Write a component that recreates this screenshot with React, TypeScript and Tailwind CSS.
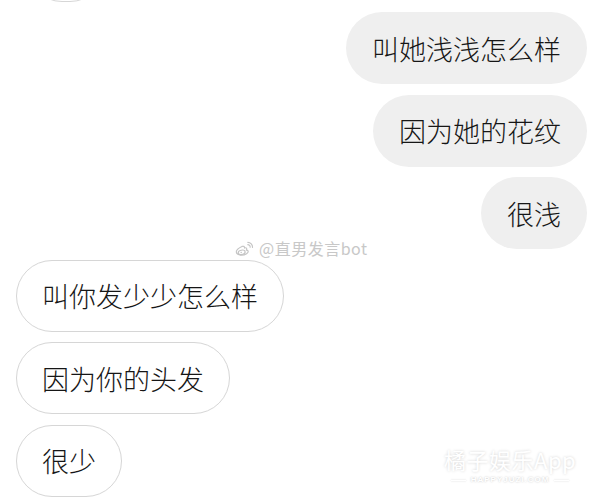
import React from 'react'

type Msg = { id: number; text: string; mine: boolean }

const messages: Msg[] = [
  { id: 1, text: '叫她浅浅怎么样', mine: true },
  { id: 2, text: '因为她的花纹', mine: true },
  { id: 3, text: '很浅', mine: true },
  { id: 4, text: '叫你发少少怎么样', mine: false },
  { id: 5, text: '因为你的头发', mine: false },
  { id: 6, text: '很少', mine: false },
]

const font = { fontFamily: '"Noto Sans CJK SC", "Noto Sans", sans-serif' }

function Bubble({ text, mine }: { text: string; mine: boolean }) {
  return (
    <div
      className={
        mine
          ? 'self-end h-[72px] flex items-center px-[26px] rounded-full bg-[#efefef] text-[27px] font-light leading-none text-[#161616] whitespace-nowrap'
          : 'self-start h-[72px] flex items-center px-[25px] rounded-full bg-white border-[1.5px] border-[#d6d6d6] text-[27px] font-light leading-none text-[#161616] whitespace-nowrap'
      }
    >
      {text}
    </div>
  )
}

function WeiboIcon() {
  return (
    <svg width="23" height="15" viewBox="0 0 24 18" fill="none" stroke="#c4c4c4" strokeWidth="1.4">
      <path
        d="M9 6.5C4.5 8.3 1.2 11.5 2.3 14.2 3.6 17.4 10.5 17.8 14.5 15.2 17.3 13.4 17 10.9 14.3 11 15.3 9.1 14.2 7.6 12.1 8.3 12 6.4 10.7 5.9 9 6.5Z"
        fill="#fff"
      />
      <ellipse cx="8.6" cy="13.6" rx="4.2" ry="2.6" transform="rotate(-12 8.6 13.6)" />
      <circle cx="8" cy="13.8" r="0.9" fill="#c4c4c4" stroke="none" />
      <path d="M16 1.6a5.6 5.6 0 0 1 5.6 6" strokeLinecap="round" />
      <path d="M16 4.4a2.8 2.8 0 0 1 2.8 3" strokeLinecap="round" />
    </svg>
  )
}

export default function App() {
  return (
    <div className="relative w-[600px] h-[501px] overflow-hidden bg-white" style={font}>
      <div className="flex flex-col gap-[10.5px] pl-[16px] pr-[13px] pt-[12px]">
        {/* bubble cut off at the top */}
        <div className="self-start -mt-[82.5px] ml-[10px] h-[72px] w-[80px] rounded-full bg-white border-[1.5px] border-[#d6d6d6]" />
        {messages.map((m) => (
          <Bubble key={m.id} text={m.text} mine={m.mine} />
        ))}
      </div>

      {/* weibo watermark */}
      <div className="absolute left-[233px] top-[240px] flex items-center gap-[3px] text-[16px] leading-none tracking-[0.5px] text-[#c8c8c8] [text-shadow:0_0_1px_#fff]">
        <WeiboIcon />
        <span>@直男发言bot</span>
      </div>

      {/* corner watermark */}
      <div className="absolute left-[444px] top-[448px] flex flex-col items-center text-white">
        <span className="text-[22px] leading-none tracking-[0.5px] [text-shadow:0_0_3px_rgba(0,0,0,0.18)]">
          橘子娱乐App
        </span>
        <div className="mt-[6px] flex items-center gap-[5px]">
          <div className="h-px w-[15px] bg-white shadow-[0_0_2px_rgba(0,0,0,0.2)]" />
          <span
            className="text-[8px] font-bold leading-none tracking-[1px] [text-shadow:0_0_2px_rgba(0,0,0,0.25)]"
            style={{ fontFamily: '"Liberation Sans", sans-serif' }}
          >
            HAPPYJUZI.COM
          </span>
          <div className="h-px w-[15px] bg-white shadow-[0_0_2px_rgba(0,0,0,0.2)]" />
        </div>
      </div>
    </div>
  )
}
